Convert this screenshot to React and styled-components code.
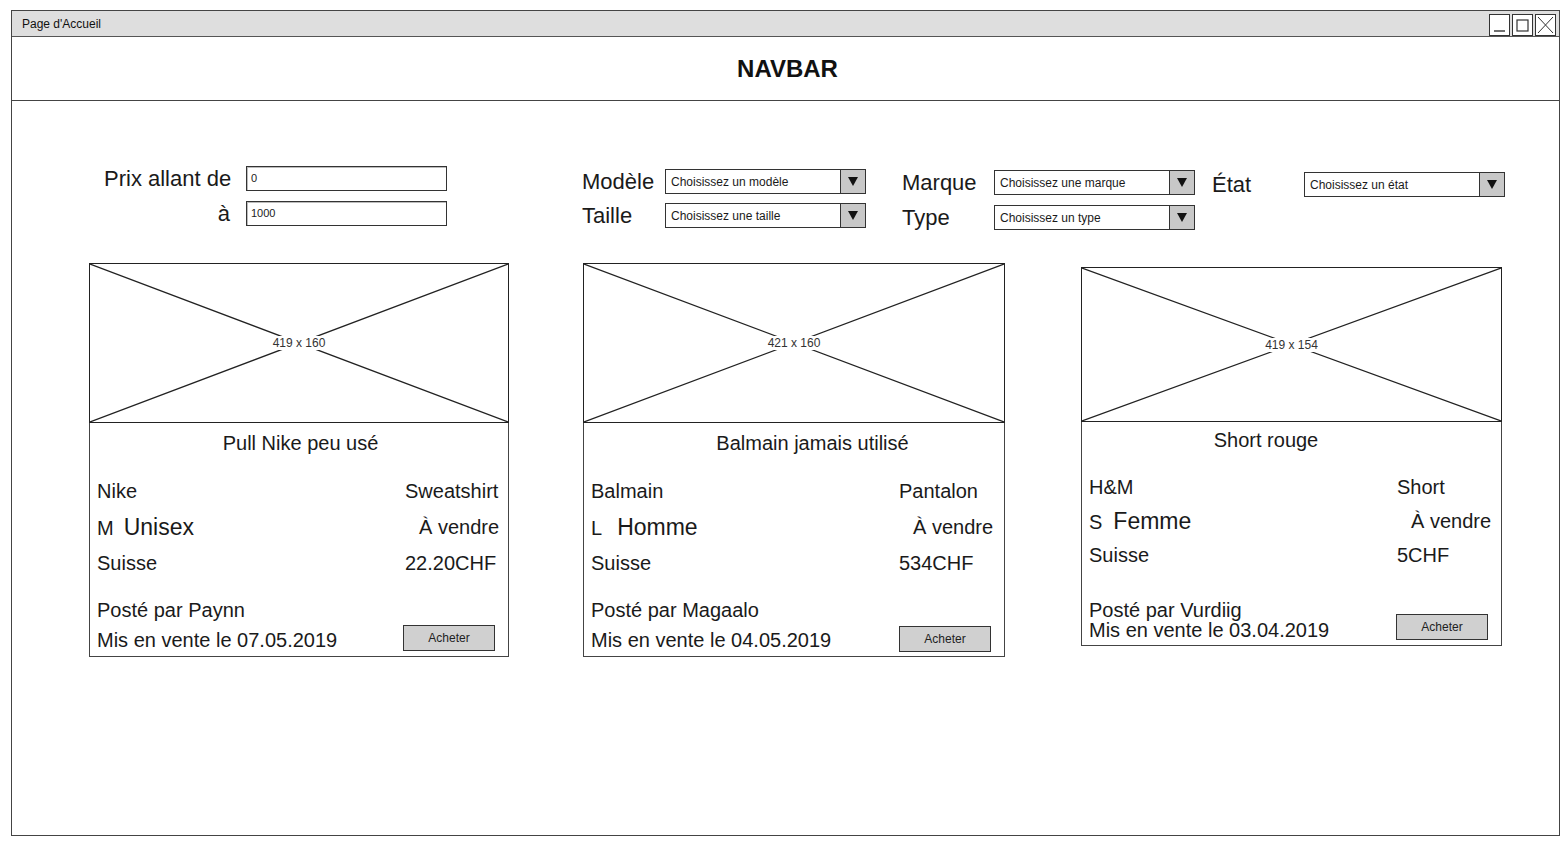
import React from 'react'
import styled, { createGlobalStyle } from 'styled-components'

const GlobalStyle = createGlobalStyle`
  body {
    margin: 0;
    background: #fff;
    font-family: "Liberation Sans", Arial, sans-serif;
    color: #1a1a1a;
  }
`

const filters = [
  {
    id: 'prix',
    labelWidth: 142,
    align: 'right',
    gap: 0,
    top: 0,
    rowGap: 10,
    rows: [
      { label: 'Prix allant de', value: '0', input: true },
      { label: 'à', value: '1000', input: true },
    ],
  },
  {
    id: 'modele',
    labelWidth: 83,
    align: 'left',
    gap: 135,
    top: 3,
    rowGap: 9,
    rows: [
      { label: 'Modèle', value: 'Choisissez un modèle' },
      { label: 'Taille', value: 'Choisissez une taille' },
    ],
  },
  {
    id: 'marque',
    labelWidth: 92,
    align: 'left',
    gap: 36,
    top: 4,
    rowGap: 10,
    rows: [
      { label: 'Marque', value: 'Choisissez une marque' },
      { label: 'Type', value: 'Choisissez un type' },
    ],
  },
  {
    id: 'etat',
    labelWidth: 92,
    align: 'left',
    gap: 17,
    top: 6,
    rowGap: 10,
    rows: [{ label: 'État', value: 'Choisissez un état' }],
  },
]

const cards = [
  {
    size: '419 x 160',
    width: 420,
    imgHeight: 160,
    title: 'Pull Nike peu usé',
    shift: 3,
    titleTop: 8,
    rowHeight: 36,
    brand: 'Nike',
    kind: 'Sweatshirt',
    letter: 'M',
    letterGap: 10,
    gender: 'Unisex',
    country: 'Suisse',
    price: '22.20CHF',
    user: 'Paynn',
    date: '07.05.2019',
    footTop: 14,
    footLine: 30,
    lift: 4,
    bottom: 1,
  },
  {
    size: '421 x 160',
    width: 422,
    imgHeight: 160,
    title: 'Balmain jamais utilisé',
    shift: 20,
    titleTop: 8,
    rowHeight: 36,
    brand: 'Balmain',
    kind: 'Pantalon',
    letter: 'L',
    letterGap: 15,
    gender: 'Homme',
    country: 'Suisse',
    price: '534CHF',
    user: 'Magaalo',
    date: '04.05.2019',
    footTop: 14,
    footLine: 30,
    lift: 3,
    bottom: 1,
  },
  {
    size: '419 x 154',
    width: 421,
    imgHeight: 155,
    title: 'Short rouge',
    shift: -24,
    titleTop: 6,
    rowHeight: 34,
    brand: 'H&M',
    kind: 'Short',
    letter: 'S',
    letterGap: 11,
    gender: 'Femme',
    country: 'Suisse',
    price: '5CHF',
    user: 'Vurdiig',
    date: '03.04.2019',
    footTop: 28,
    footLine: 20,
    lift: 0,
    bottom: 5,
    top: 4,
  },
]

function WindowButtons() {
  return (
    <WinButtons>
      <WinButton>
        <svg width="19" height="20" viewBox="0 0 19 20">
          <line x1="4" y1="16" x2="15" y2="16" stroke="#333" strokeWidth="1.4" />
        </svg>
      </WinButton>
      <WinButton>
        <svg width="19" height="20" viewBox="0 0 19 20">
          <rect x="4" y="5" width="11" height="11" fill="none" stroke="#333" strokeWidth="1.2" />
        </svg>
      </WinButton>
      <WinButton>
        <svg width="19" height="20" viewBox="0 0 19 20">
          <path d="M2 2 L17 18 M17 2 L2 18" stroke="#333" strokeWidth="1" />
        </svg>
      </WinButton>
    </WinButtons>
  )
}

function Dropdown({ value }) {
  return (
    <Select>
      <SelectText>{value}</SelectText>
      <SelectArrow>
        <svg width="10" height="9" viewBox="0 0 10 9">
          <polygon points="0,0 10,0 5,9" fill="#111" />
        </svg>
      </SelectArrow>
    </Select>
  )
}

function Placeholder({ size, height }) {
  return (
    <Image $height={height}>
      <svg width="100%" height="100%" viewBox="0 0 100 100" preserveAspectRatio="none">
        <path d="M0 0 L100 100 M100 0 L0 100" stroke="#222" strokeWidth="1.2" vectorEffect="non-scaling-stroke" fill="none" />
      </svg>
      <ImageLabel>{size}</ImageLabel>
    </Image>
  )
}

function ProductCard({ card }) {
  return (
    <Card $width={card.width} $top={card.top || 0}>
      <Placeholder size={card.size} height={card.imgHeight} />
      <CardBody $bottom={card.bottom}>
        <CardTitle $shift={card.shift} $top={card.titleTop}>{card.title}</CardTitle>
        <InfoGrid $row={card.rowHeight}>
          <span>{card.brand}</span>
          <span>{card.kind}</span>
          <SizeCell $gap={card.letterGap}>
            <span>{card.letter}</span>
            <Gender>{card.gender}</Gender>
          </SizeCell>
          <Status>À vendre</Status>
          <span>{card.country}</span>
          <span>{card.price}</span>
        </InfoGrid>
        <Footer $top={card.footTop} $line={card.footLine}>
          <div>
            <div>Posté par {card.user}</div>
            <div>Mis en vente le {card.date}</div>
          </div>
          <BuyButton $lift={card.lift}>Acheter</BuyButton>
        </Footer>
      </CardBody>
    </Card>
  )
}

export default function App() {
  return (
    <>
      <GlobalStyle />
      <Page>
        <Window>
          <TitleBar>
            <TitleText>Page d'Accueil</TitleText>
            <WindowButtons />
          </TitleBar>
          <Navbar>NAVBAR</Navbar>
          <Content>
            <FilterBar>
              {filters.map((group) => (
                <FilterGroup
                  key={group.id}
                  $label={group.labelWidth}
                  $gap={group.gap}
                  $top={group.top}
                  $rowGap={group.rowGap}
                >
                  {group.rows.map((row) => (
                    <React.Fragment key={row.label}>
                      <FilterLabel $align={group.align}>{row.label}</FilterLabel>
                      {row.input ? <TextInput>{row.value}</TextInput> : <Dropdown value={row.value} />}
                    </React.Fragment>
                  ))}
                </FilterGroup>
              ))}
            </FilterBar>
            <CardRow>
              {cards.map((card) => (
                <ProductCard key={card.user} card={card} />
              ))}
            </CardRow>
          </Content>
        </Window>
      </Page>
    </>
  )
}

const Page = styled.div`
  padding: 10px 0 0 11px;
  width: 1565px;
  height: 845px;
  box-sizing: border-box;
`

const Window = styled.div`
  width: 1549px;
  height: 826px;
  box-sizing: border-box;
  border: 1px solid #444;
  display: flex;
  flex-direction: column;
`

const TitleBar = styled.div`
  height: 26px;
  box-sizing: border-box;
  background: #dedede;
  border-bottom: 1px solid #555;
  display: flex;
  align-items: center;
  justify-content: space-between;
  padding: 0 3px 0 10px;
`

const TitleText = styled.span`
  font-size: 12px;
  color: #111;
`

const WinButtons = styled.div`
  display: flex;
  gap: 2px;
  margin-top: 3px;
`

const WinButton = styled.div`
  width: 21px;
  height: 22px;
  box-sizing: border-box;
  border: 1px solid #333;
  background: #fff;
  display: flex;
  align-items: center;
  justify-content: center;
`

const Navbar = styled.div`
  height: 64px;
  box-sizing: border-box;
  border-bottom: 1px solid #444;
  display: flex;
  align-items: center;
  justify-content: center;
  font-weight: bold;
  font-size: 24px;
  color: #111;
  padding: 1px 0 0 4px;
`

const Content = styled.div`
  padding: 65px 0 0 0;
`

const FilterBar = styled.div`
  display: flex;
  align-items: flex-start;
  padding-left: 92px;
`

const FilterGroup = styled.div`
  display: grid;
  grid-template-columns: ${(p) => p.$label}px 201px;
  grid-auto-rows: 25px;
  row-gap: ${(p) => p.$rowGap}px;
  margin-left: ${(p) => p.$gap}px;
  margin-top: ${(p) => p.$top}px;
`

const FilterLabel = styled.div`
  font-size: 22px;
  line-height: 25px;
  text-align: ${(p) => p.$align};
  padding-right: ${(p) => (p.$align === 'right' ? 16 : 0)}px;
  white-space: nowrap;
`

const TextInput = styled.div`
  height: 25px;
  box-sizing: border-box;
  border: 1px solid #333;
  box-shadow: inset 1px 1px 0 #bbb;
  font-size: 11px;
  line-height: 23px;
  padding-left: 4px;
  color: #222;
`

const Select = styled.div`
  height: 25px;
  box-sizing: border-box;
  border: 1px solid #333;
  display: flex;
  background: #fff;
`

const SelectText = styled.div`
  flex: 1;
  font-size: 12px;
  line-height: 25px;
  padding-left: 5px;
  white-space: nowrap;
  overflow: hidden;
`

const SelectArrow = styled.div`
  width: 24px;
  background: #c8c8c8;
  border-left: 1px solid #333;
  display: flex;
  align-items: center;
  justify-content: center;
`

const CardRow = styled.div`
  display: flex;
  align-items: flex-start;
  padding-left: 77px;
  margin-top: 33px;
  gap: 74px;

  & > :last-child {
    margin-left: 2px;
  }
`

const Card = styled.div`
  width: ${(p) => p.$width}px;
  box-sizing: border-box;
  border: 1px solid #444;
  margin-top: ${(p) => p.$top}px;
`

const Image = styled.div`
  position: relative;
  height: ${(p) => p.$height}px;
  box-sizing: border-box;
  border: 1px solid #222;
  margin: -1px -1px 0 -1px;

  & > svg {
    display: block;
  }
`

const ImageLabel = styled.span`
  position: absolute;
  left: 50%;
  top: 50%;
  transform: translate(-50%, -50%);
  background: #fff;
  padding: 0 2px;
  font-size: 12px;
  color: #333;
  line-height: 14px;
`

const CardBody = styled.div`
  padding: 0 10px ${(p) => p.$bottom}px 7px;
  font-size: 20px;
`

const CardTitle = styled.div`
  margin-top: ${(p) => p.$top}px;
  line-height: 24px;
  text-align: center;
  padding-left: ${(p) => (p.$shift > 0 ? p.$shift * 2 : 0)}px;
  padding-right: ${(p) => (p.$shift < 0 ? -p.$shift * 2 : 0)}px;
`

const InfoGrid = styled.div`
  margin-top: 18px;
  display: grid;
  grid-template-columns: 308px 1fr;
  grid-auto-rows: ${(p) => p.$row}px;
  align-items: center;
  white-space: nowrap;
`

const SizeCell = styled.div`
  display: flex;
  align-items: baseline;
  gap: ${(p) => p.$gap}px;
`

const Gender = styled.span`
  font-size: 23px;
`

const Status = styled.span`
  padding-left: 14px;
`

const Footer = styled.div`
  margin-top: ${(p) => p.$top}px;
  line-height: ${(p) => p.$line}px;
  display: flex;
  justify-content: space-between;
  align-items: flex-end;
  white-space: nowrap;
`

const BuyButton = styled.div`
  width: 92px;
  height: 26px;
  box-sizing: border-box;
  border: 1px solid #333;
  background: #d0d0d0;
  font-size: 12px;
  line-height: 24px;
  text-align: center;
  color: #222;
  margin: 0 3px ${(p) => p.$lift}px 0;
`
